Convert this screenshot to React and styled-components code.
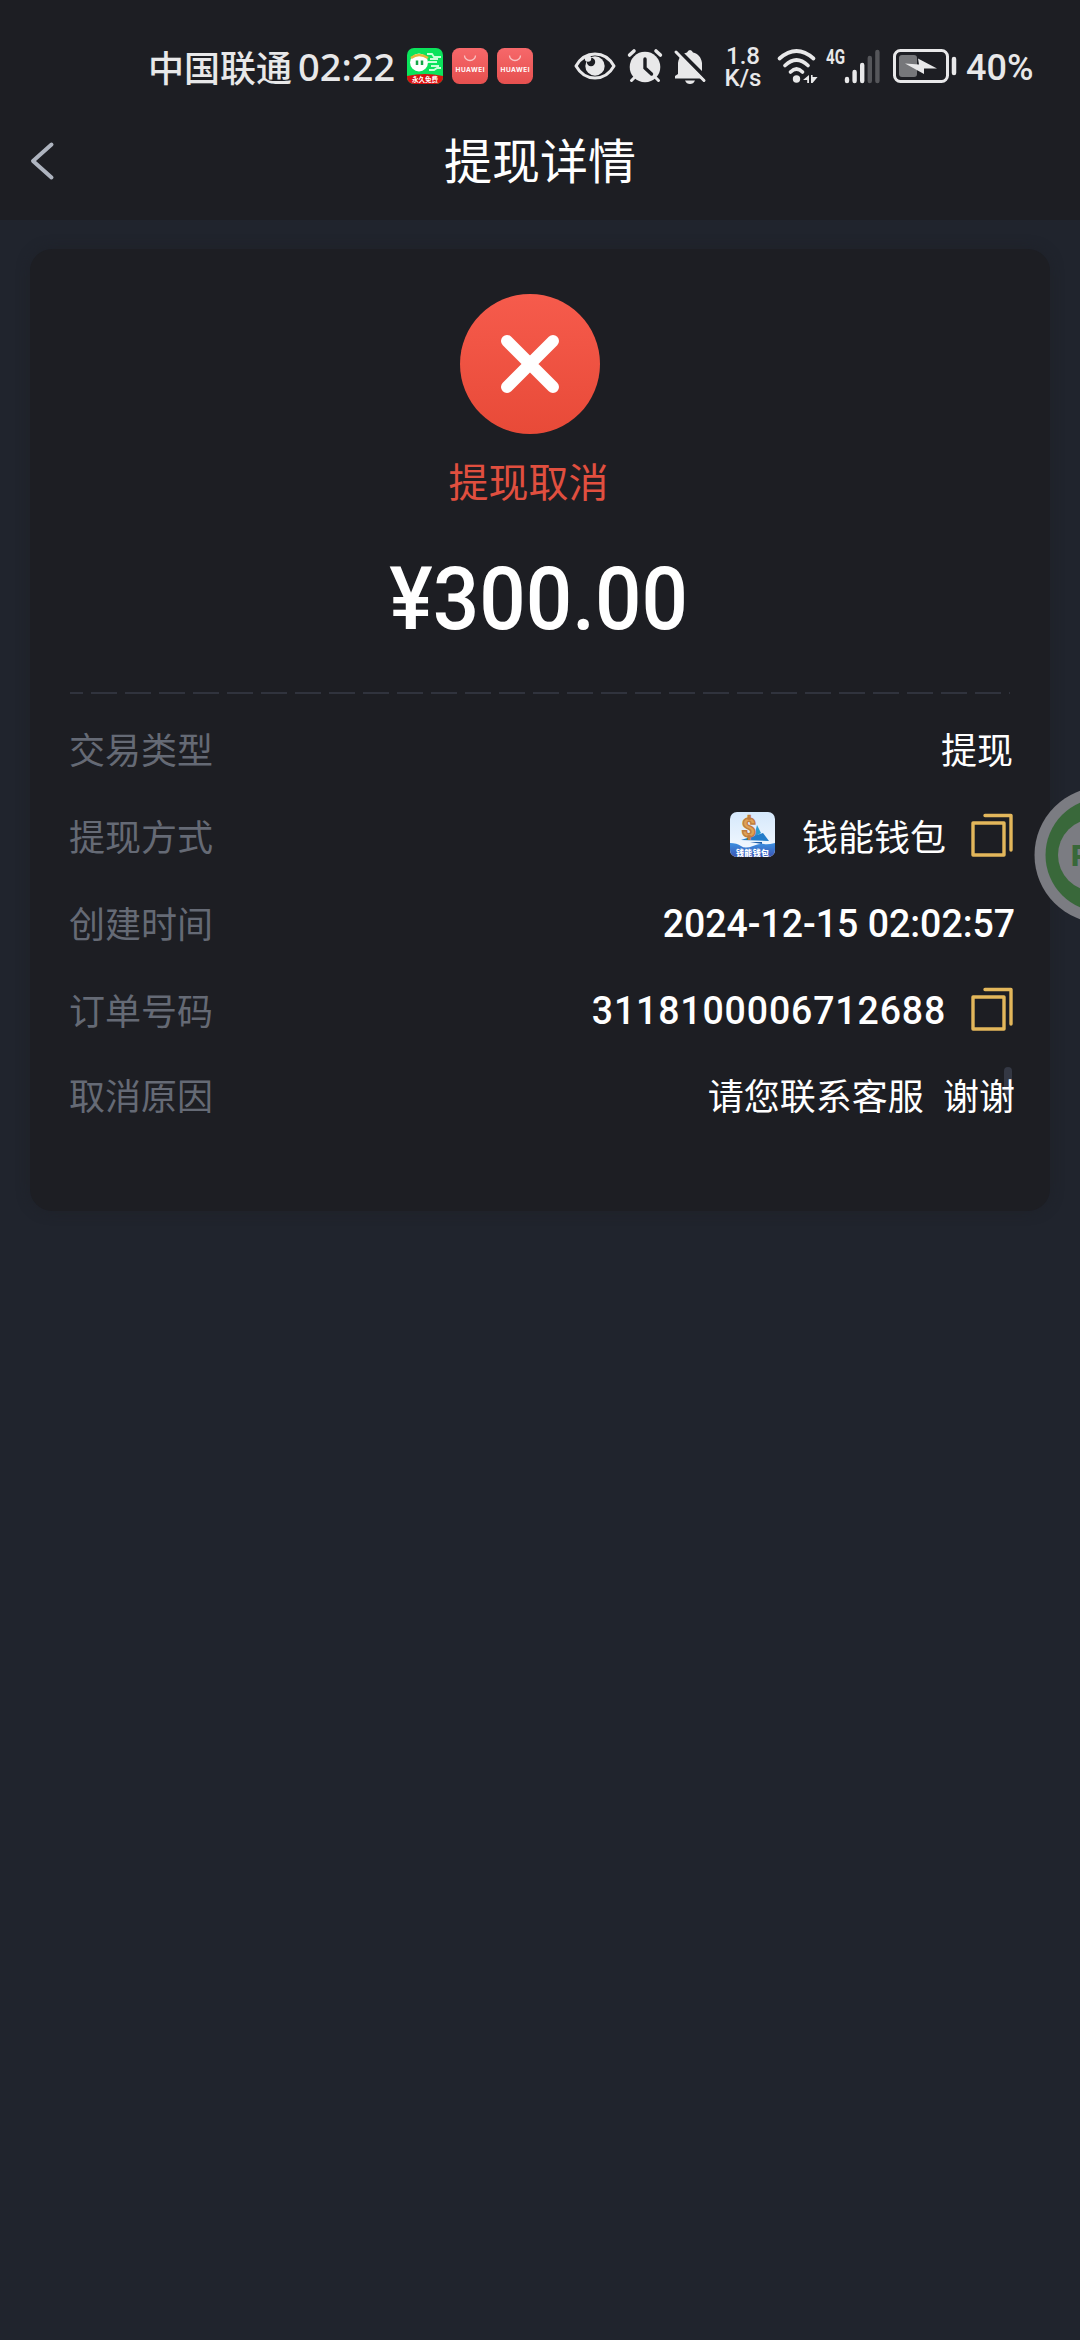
import styled, { createGlobalStyle } from 'styled-components';

const cjk = '"Noto Sans CJK SC"';

const GlobalStyle = createGlobalStyle`
    * {
        box-sizing: border-box;
    }
    body {
        margin: 0;
        background: #20242d;
        font-family: Roboto, ${cjk}, sans-serif;
    }
`;

const Page = styled.div`
    position: relative;
    width: 1080px;
    height: 2340px;
    overflow: hidden;
    background: #20242d;
`;

const StatusBar = styled.div`
    display: flex;
    align-items: center;
    height: 106px;
    padding: 26px 0 0 148px;
    background: #1d1e23;
    color: #e8e8e9;
    line-height: 1;
    white-space: nowrap;
    svg {
        flex: none;
        display: block;
        overflow: visible;
    }
`;

const Carrier = styled.span`
    width: 150px;
    font: 500 36px/50px ${cjk}, sans-serif;
`;

const Clock = styled.span`
    width: 109px;
    font: 500 38px/50px "Noto Sans", sans-serif;
`;

const AppBadges = styled.div`
    display: flex;
    gap: 9px;
`;

const StatusIcons = styled.div`
    display: flex;
    align-items: center;
    margin-left: 41px;
`;

const AlertIcons = styled.div`
    display: flex;
    gap: 11px;
`;

const Speed = styled.div`
    width: 52px;
    margin: 2px 8px 0 11px;
    text-align: center;
    font: 500 24px/22px Roboto, sans-serif;
`;

const NetworkIcons = styled.div`
    display: flex;
    gap: 7px;
    margin-right: 11px;
`;

const Battery = styled.span`
    margin: 4px 0 0 9px;
    font: 500 36px/50px Roboto, sans-serif;
`;

const Header = styled.header`
    display: grid;
    grid-template-columns: 120px 1fr 120px;
    align-items: center;
    height: 114px;
    padding-bottom: 4px;
    background: #1d1e23;
    svg {
        display: block;
        margin-left: 29px;
    }
`;

const Title = styled.h1`
    margin: -6px 0 0;
    text-align: center;
    color: #fff;
    font: 400 48px/70px ${cjk}, sans-serif;
`;

const Card = styled.section`
    width: 1020px;
    height: 962px;
    margin: 29px 30px 0;
    padding: 45px 37px 0 39px;
    border-radius: 22px;
    background: #1d1e23;
    box-shadow: 0 0 14px rgba(29, 30, 35, 0.45);
`;

const Result = styled.div`
    display: flex;
    flex-direction: column;
    align-items: center;
    svg {
        display: block;
        margin-left: -23px;
    }
`;

const ResultText = styled.div`
    margin: 16px 0 0 -25px;
    color: #e14f3f;
    font: 400 40px/60px ${cjk}, sans-serif;
`;

const Amount = styled.div`
    margin: 40px 0 0 -4px;
    color: #fff;
    font: 500 88px/98px Roboto, sans-serif;
    transform: scaleX(0.93);
`;

const Divider = styled.div`
    width: 940px;
    height: 2px;
    margin: 44px 0 10px 1px;
    background: repeating-linear-gradient(90deg, #30333d 0 26px, transparent 26px 34px) -13px 0 / 955px 2px no-repeat;
`;

const Row = styled.div`
    display: flex;
    align-items: center;
    justify-content: space-between;
    height: ${({ $height }) => $height || 87}px;
`;

const Label = styled.span`
    color: #656a75;
    font: 400 36px/54px ${cjk}, sans-serif;
`;

const Value = styled.div`
    display: flex;
    align-items: center;
    color: #fff;
    font: 400 36px/54px ${cjk}, sans-serif;
    white-space: pre;
    svg {
        display: block;
    }
`;

const Digits = styled.span`
    margin: 4px -2px 0 0;
    font: 500 39px/54px Roboto, sans-serif;
    letter-spacing: ${({ $spacing }) => $spacing || 0}px;
    transform: scaleX(0.96);
    transform-origin: right;
`;

const OrderNumber = styled(Digits)`
    margin-right: 25px;
`;

const WalletName = styled.span`
    margin: 0 25px 0 27px;
`;

const Reason = styled.span`
    position: relative;
    margin-right: -2px;
    word-spacing: 1.5px;
    &::before {
        content: '';
        position: absolute;
        top: 0;
        right: 3px;
        width: 8px;
        height: 28px;
        border-radius: 4px;
        background: #343844;
    }
`;

const ReasonText = styled.span`
    position: relative;
`;

const FloatingBall = styled.svg`
    position: absolute;
    top: 787px;
    right: 0;
`;

const GameIcon = () => (
    <svg width="36" height="36" viewBox="0 0 36 36">
        <defs>
            <clipPath id="game"><rect width="36" height="36" rx="7" /></clipPath>
        </defs>
        <g clipPath="url(#game)">
            <rect width="36" height="36" fill="#0be35b" />
            <path d="M20 6h5l2 3h7M23 11h8M21 14h9M24 18h8M22 22h5l3-2h4" stroke="#c9ffd8" strokeWidth="1.8" fill="none" />
            <circle cx="12" cy="14.5" r="9" fill="#fff" />
            <path d="M4 10q8-6 17 0" stroke="#e2b73a" strokeWidth="2.5" fill="none" />
            <path d="M10 12.5v4.5M15 12.5v4.5" stroke="#16a548" strokeWidth="2.5" />
            <path d="M0 28q18-4 36 0v8H0z" fill="#dc1010" />
            <text x="18" y="34" textAnchor="middle" fontSize="6.5" fontWeight="700" fill="#fff" fontFamily="Noto Sans CJK SC">永久免费</text>
        </g>
    </svg>
);

const HuaweiIcon = () => (
    <svg width="36" height="36" viewBox="0 0 36 36">
        <defs>
            <linearGradient id="hw" x2="0" y2="1">
                <stop stopColor="#f6686a" />
                <stop offset="1" stopColor="#e6504f" />
            </linearGradient>
        </defs>
        <rect width="36" height="36" rx="7.5" fill="url(#hw)" />
        <path d="M12.5 7.5a5.5 5 0 0 0 11 0" fill="none" stroke="#f9c4c4" strokeWidth="1.3" />
        <text x="18" y="24" textAnchor="middle" textLength="29" fontSize="6.5" fontWeight="700" fill="#fff" fontFamily="Inter">HUAWEI</text>
    </svg>
);

const EyeIcon = () => (
    <svg width="42" height="36" viewBox="0 0 42 36">
        <path d="M2 18C11 2 31 2 40 18C31 34 11 34 2 18z" fill="none" stroke="#e8e8e9" strokeWidth="3" strokeLinejoin="round" />
        <circle cx="21" cy="18" r="9.7" fill="#e8e8e9" />
        <circle cx="17" cy="14" r="4.2" fill="#1d1e23" />
        <circle cx="14" cy="10.5" r="3.2" fill="#e8e8e9" />
    </svg>
);

const AlarmIcon = () => (
    <svg width="36" height="36" viewBox="0 0 36 36">
        <g stroke="#e8e8e9" strokeLinecap="round" strokeWidth="3.6">
            <path d="M2.6 7L7 3M33.4 7L29 3" />
            <path d="M8 29l-3.5 3.5M28 29l3.5 3.5" strokeWidth="3" />
        </g>
        <circle cx="18" cy="19" r="15.3" fill="#e8e8e9" />
        <path d="M18 11v9l6.5 6" fill="none" stroke="#1d1e23" strokeWidth="3.4" strokeLinecap="round" />
    </svg>
);

const MutedIcon = () => (
    <svg width="32" height="36" viewBox="0 0 32 36">
        <path d="M4 26V15C5 8 9 5.5 13 4.5Q14 2 16 2t3 2.500C24 5.5 27 9 28 15v11l3 2v2.500H1V28z" fill="#e8e8e9" />
        <path d="M11 32.500h10q-1.500 3.500-5 3.500t-5-3.500z" fill="#e8e8e9" />
        <path d="M4.500 2.500l28 28" stroke="#1d1e23" strokeWidth="4" />
        <path d="M2 4l28 28.500" stroke="#e8e8e9" strokeWidth="3" strokeLinecap="round" />
    </svg>
);

const WifiIcon = () => (
    <svg width="42" height="36" viewBox="0 0 42 36">
        <g fill="none" stroke="#e8e8e9" strokeWidth="3.7" strokeLinecap="round">
            <path d="M2.500 10.500Q19.500-4.500 36.500 10.500" />
            <path d="M8 17.500Q19.500 6.500 31 17.500" />
            <path d="M13.500 24Q19.500 18 25.500 24" />
        </g>
        <circle cx="19.500" cy="31" r="3.700" fill="#e8e8e9" />
        <path d="M32 27v8h-1.800v-3H26zM34 27v8h1.600l5-6H35.600v-2z" fill="#e8e8e9" />
    </svg>
);

const SignalIcon = () => (
    <svg width="56" height="36" viewBox="0 0 56 36">
        <text x="0" y="16" textLength="19" lengthAdjust="spacingAndGlyphs" fontSize="20" fontWeight="700" fontFamily="Roboto" fill="#e8e8e9">4G</text>
        <g strokeWidth="4.400" strokeLinecap="round" stroke="#e8e8e9">
            <path d="M21 31v2M28.600 24v9M36.200 17v16" />
            <path d="M43.800 10v23M51.400 4v29" stroke="#55565a" />
        </g>
    </svg>
);

const BatteryIcon = () => (
    <svg width="64" height="36" viewBox="0 0 64 36">
        <rect x="1.500" y="2.500" width="53" height="31" rx="6" fill="none" stroke="#e8e8e9" strokeWidth="3" />
        <rect x="6" y="7" width="18" height="22" rx="3" fill="#76777a" />
        <path d="M12 15.500L26 16.500L25 10.500L44 20.500L31 20.500V26z" fill="#e8e8e9" />
        <path d="M61 11v14" stroke="#e8e8e9" strokeWidth="4.500" strokeLinecap="round" />
    </svg>
);

const BackIcon = () => (
    <svg width="30" height="40" viewBox="0 0 30 40">
        <path d="M22.500 3.500L4 20l18.500 16.500" fill="none" stroke="#aeb4bf" strokeWidth="4" strokeLinecap="round" strokeLinejoin="round" />
    </svg>
);

const CancelIcon = () => (
    <svg width="140" height="140" viewBox="0 0 140 140">
        <defs>
            <linearGradient id="cancel" x2="0" y2="1">
                <stop stopColor="#f65b4c" />
                <stop offset="1" stopColor="#e84a38" />
            </linearGradient>
        </defs>
        <circle cx="70" cy="70" r="70" fill="url(#cancel)" />
        <path d="M47 47l46 46M93 47L47 93" stroke="#fff" strokeWidth="12" strokeLinecap="round" />
    </svg>
);

const CopyIcon = () => (
    <svg width="42" height="44" viewBox="0 0 42 44">
        <g fill="none" stroke="#e3b75b" strokeWidth="3.4" strokeLinejoin="round" strokeLinecap="round">
            <rect x="2" y="10" width="31" height="32" />
            <path d="M14 2.500h26V37" />
        </g>
    </svg>
);

const WalletIcon = () => (
    <svg width="45" height="45" viewBox="0 0 45 45">
        <defs>
            <linearGradient id="sky" x2="0" y2="1">
                <stop stopColor="#d5e8fb" />
                <stop offset="1" stopColor="#f7fbff" />
            </linearGradient>
            <linearGradient id="sea" x2="0" y2="1">
                <stop stopColor="#3b8fe0" />
                <stop offset="1" stopColor="#3b55b4" />
            </linearGradient>
            <clipPath id="wallet"><rect width="45" height="45" rx="7" /></clipPath>
        </defs>
        <g clipPath="url(#wallet)">
            <rect width="45" height="45" fill="url(#sky)" />
            <path d="M27 13l4 8-7 4z" fill="#2d9bd0" />
            <path d="M11 28l22-7 6 8z" fill="#237cc9" />
            <text x="11.500" y="24.500" fontSize="25" fontWeight="900" fontFamily="Roboto" fill="#dfa255" stroke="#c07d3e" strokeWidth="1.400">$</text>
            <path d="M20 30h12v2z" fill="#1c5da8" />
            <path d="M0 31q7 0 11 3t12 0 11-2 11-1v14H0z" fill="url(#sea)" />
            <text x="22.500" y="43.500" textAnchor="middle" textLength="33" fontSize="8" fontWeight="900" fontFamily="Noto Sans CJK SC" fill="#fff">钱能钱包</text>
        </g>
    </svg>
);

const App = () => {
    return (
        <Page>
            <GlobalStyle />
            <StatusBar>
                <Carrier>中国联通</Carrier>
                <Clock>02:22</Clock>
                <AppBadges>
                    <GameIcon />
                    <HuaweiIcon />
                    <HuaweiIcon />
                </AppBadges>
                <StatusIcons>
                    <AlertIcons>
                        <EyeIcon />
                        <AlarmIcon />
                        <MutedIcon />
                    </AlertIcons>
                    <Speed>1.8<br />K/s</Speed>
                    <NetworkIcons>
                        <WifiIcon />
                        <SignalIcon />
                    </NetworkIcons>
                    <BatteryIcon />
                    <Battery>40%</Battery>
                </StatusIcons>
            </StatusBar>
            <Header>
                <BackIcon />
                <Title>提现详情</Title>
            </Header>
            <Card>
                <Result>
                    <CancelIcon />
                    <ResultText>提现取消</ResultText>
                    <Amount>¥300.00</Amount>
                </Result>
                <Divider />
                <Row>
                    <Label>交易类型</Label>
                    <Value>提现</Value>
                </Row>
                <Row>
                    <Label>提现方式</Label>
                    <Value>
                        <WalletIcon />
                        <WalletName>钱能钱包</WalletName>
                        <CopyIcon />
                    </Value>
                </Row>
                <Row>
                    <Label>创建时间</Label>
                    <Value><Digits>2024-12-15 02:02:57</Digits></Value>
                </Row>
                <Row>
                    <Label>订单号码</Label>
                    <Value>
                        <OrderNumber $spacing={0.9}>3118100006712688</OrderNumber>
                        <CopyIcon />
                    </Value>
                </Row>
                <Row $height={84}>
                    <Label>取消原因</Label>
                    <Value>
                        <Reason><ReasonText>请您联系客服  谢谢</ReasonText></Reason>
                    </Value>
                </Row>
            </Card>
            <FloatingBall width="46" height="136" viewBox="0 0 46 136">
                <circle cx="68.500" cy="68" r="68" fill="#7b7c82" />
                <circle cx="68.500" cy="68" r="57" fill="#39683a" />
                <circle cx="60" cy="68" r="36" fill="#7b7c82" />
                <text x="37" y="78.500" fontSize="29" fontWeight="900" fontFamily="Roboto" fill="#39683a">R</text>
            </FloatingBall>
        </Page>
    );
};

export default App;
